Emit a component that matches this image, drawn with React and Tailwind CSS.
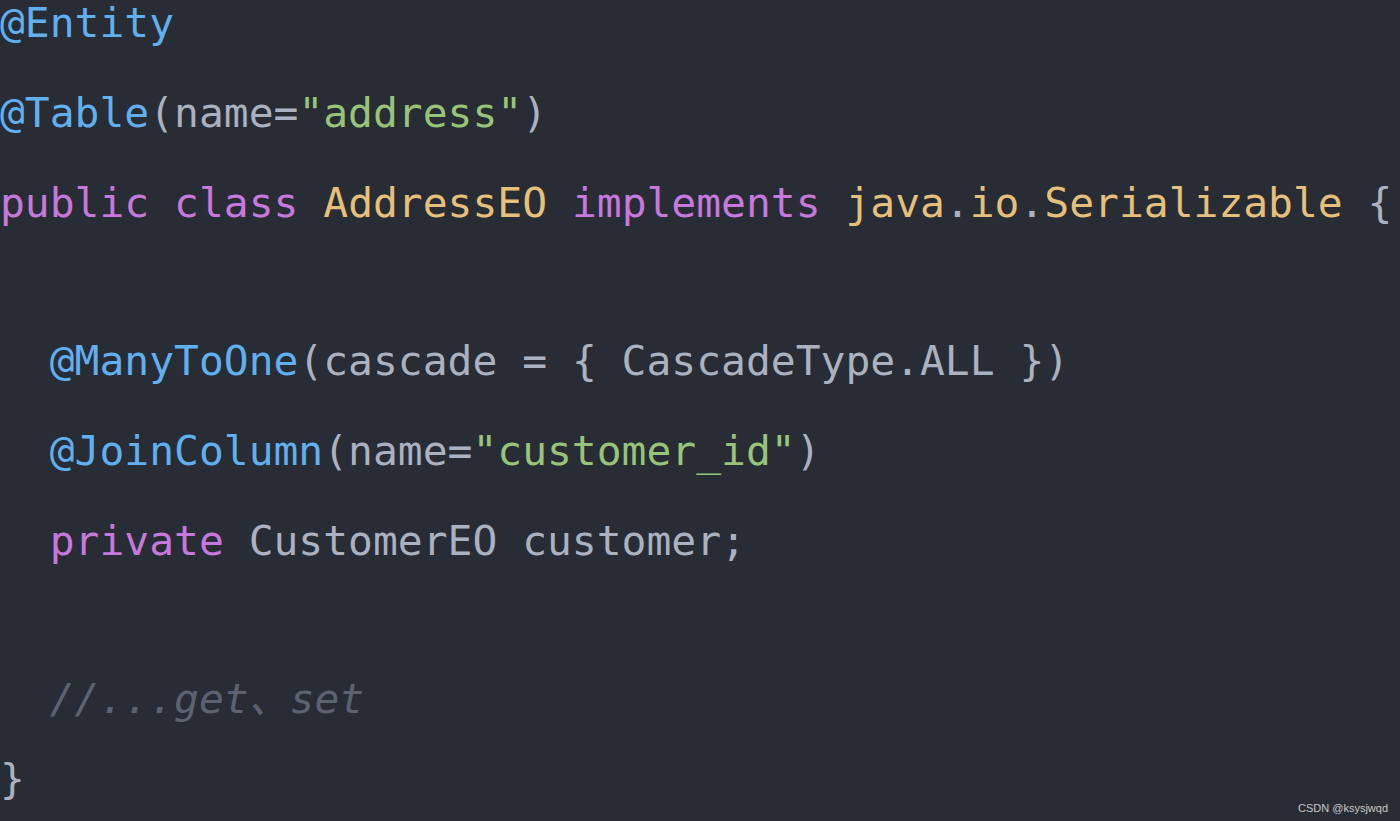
const B = "text-[#61afef]";
const T = "text-[#abb2bf]";
const G = "text-[#98c379]";
const P = "text-[#c678dd]";
const Y = "text-[#e5c07b]";

export default function App() {
  return (
    <div className="relative w-[1400px] h-[821px] overflow-hidden bg-[#282c34]">
      <div className="flex flex-col pt-[1px] whitespace-pre text-[41.3px] leading-[44px] font-['DejaVu_Sans_Mono','Liberation_Mono',monospace]">
        <div className={B}>@Entity</div>
        <div className="mt-[46px]">
          <span className={B}>@Table</span>
          <span className={T}>(name=</span>
          <span className={G}>"address"</span>
          <span className={T}>)</span>
        </div>
        <div className="mt-[46px]">
          <span className={P}>public</span>
          <span className={T}> </span>
          <span className={P}>class</span>
          <span className={T}> </span>
          <span className={Y}>AddressEO</span>
          <span className={T}> </span>
          <span className={P}>implements</span>
          <span className={T}> </span>
          <span className={Y}>java</span>
          <span className={T}>.</span>
          <span className={Y}>io</span>
          <span className={T}>.</span>
          <span className={Y}>Serializable</span>
          <span className={T}> {"{"}</span>
        </div>
        <div className="mt-[114px]">
          <span className={T}>  </span>
          <span className={B}>@ManyToOne</span>
          <span className={T}>(cascade = {"{"} CascadeType.ALL {"}"})</span>
        </div>
        <div className="mt-[46px]">
          <span className={T}>  </span>
          <span className={B}>@JoinColumn</span>
          <span className={T}>(name=</span>
          <span className={G}>"customer_id"</span>
          <span className={T}>)</span>
        </div>
        <div className="mt-[46px]">
          <span className={T}>  </span>
          <span className={P}>private</span>
          <span className={T}> CustomerEO customer;</span>
        </div>
        <div className="mt-[110px] italic text-[#5c6370]">
          <span>  //...get</span>
          <span className="inline-block w-[41px] font-['Noto_Sans_CJK_SC',sans-serif]">、</span>
          <span>set</span>
        </div>
        <div className={"mt-[36px] " + T}>{"}"}</div>
      </div>
      <div className="absolute right-[12px] bottom-[6px] text-[11px] leading-[14px] text-[#c8c8c8] font-['Liberation_Sans',Arial,sans-serif]">
        CSDN @ksysjwqd
      </div>
    </div>
  );
}
